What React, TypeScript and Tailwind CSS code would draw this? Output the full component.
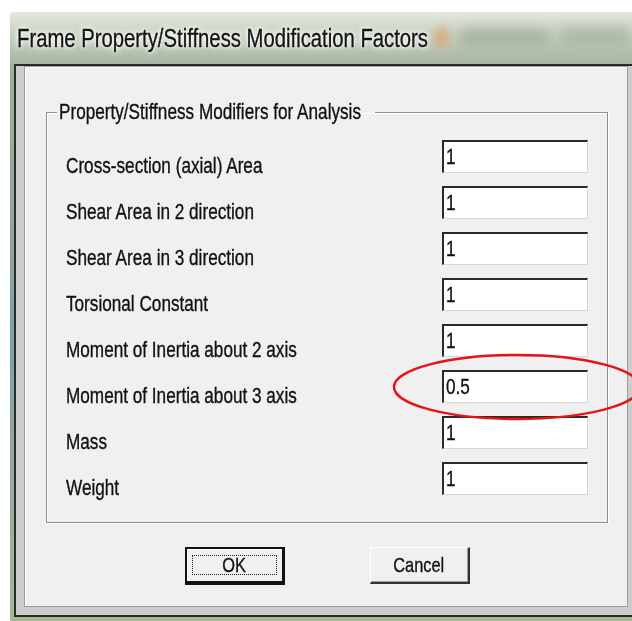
const rows = [
  { label: "Cross-section (axial) Area", value: "1" },
  { label: "Shear Area in 2 direction", value: "1" },
  { label: "Shear Area in 3 direction", value: "1" },
  { label: "Torsional Constant", value: "1" },
  { label: "Moment of Inertia about 2 axis", value: "1" },
  { label: "Moment of Inertia about 3 axis", value: "0.5" },
  { label: "Mass", value: "1" },
  { label: "Weight", value: "1" },
];

// Old MS Sans Serif is narrow, so squeeze the text horizontally
function Narrow({ children, center }: { children: React.ReactNode; center?: boolean }) {
  return (
    <span
      className={
        "inline-block whitespace-nowrap scale-x-[0.78] [-webkit-text-stroke:0.35px_#111] " +
        (center ? "origin-center" : "origin-left")
      }
    >
      {children}
    </span>
  );
}

function Field({ value }: { value: string }) {
  return (
    <div className="w-[146px] h-[33px] bg-white border-t-2 border-l-2 border-t-[#2a2a2a] border-l-[#2a2a2a] border-r border-b border-r-[#d6d6d6] border-b-[#d6d6d6] pl-[2px] text-[22px] leading-[30px] text-[#111]">
      <Narrow>{value}</Narrow>
    </div>
  );
}

export default function App() {
  return (
    <div className="relative w-[632px] h-[621px] overflow-hidden bg-white pt-[12px] pl-[10px] font-['Liberation_Sans',Arial,sans-serif]">
      <div className="w-[640px] flex flex-col">
        {/* glass title bar */}
        <div className="relative h-[52px] flex items-center pl-[7px] rounded-tl-[3px] bg-gradient-to-b from-[#e3e8df] via-[#c3cdbd] to-[#a9b5a3] overflow-hidden">
          <div className="absolute left-[425px] top-[14px] w-[14px] h-[22px] rounded-full bg-[#e0a070] blur-[4px] opacity-70" />
          <div className="absolute left-[450px] top-[16px] w-[90px] h-[18px] rounded bg-[#9aa594] blur-[6px] opacity-60" />
          <div className="absolute left-[550px] top-[14px] w-[70px] h-[20px] rounded bg-[#a2ad9c] blur-[6px] opacity-60" />
          <span className="relative text-[26px] text-[#161616] [text-shadow:0_0_6px_#fff,0_0_10px_#fff,0_0_3px_#fff]">
            <Narrow>Frame Property/Stiffness Modification Factors</Narrow>
          </span>
        </div>

        {/* window frame */}
        <div className="bg-gradient-to-b from-[#9fb190] via-[#7fa0a8] to-[#a5b894] pl-[4px] pb-[4px]">
          <div className="border-t-2 border-l-2 border-b-2 border-[#2b2b2b] bg-[#cdcdcd] pl-[8px] pb-[8px]">
            <div className="w-[604px] border border-[#9c9c9c] bg-[#f0f0f0] pl-[21px] pt-[33px] pb-[21px] shadow-[inset_1px_1px_0_#fff]">
              <fieldset className="w-[562px] border border-[#8f8f8f] pl-[19px] pr-[19px] pt-[16px] pb-[14px] shadow-[inset_1px_1px_0_#fff,1px_1px_0_#fff]">
                <legend className="-ml-[9px] px-[2px] text-[22px] leading-[24px] text-[#111]">
                  <div className="w-[314px]">
                    <Narrow>Property/Stiffness Modifiers for Analysis</Narrow>
                  </div>
                </legend>
                <div className="flex flex-col">
                  {rows.map((r) => (
                    <div key={r.label} className="h-[46px] flex justify-between items-start">
                      <div className="mt-[9px] text-[22px] leading-[33px] text-[#111]">
                        <Narrow>{r.label}</Narrow>
                      </div>
                      <Field value={r.value} />
                    </div>
                  ))}
                </div>
              </fieldset>

              <div className="flex justify-center gap-[85px] mt-[24px] pr-[19px]">
                <button className="w-[100px] h-[38px] border-t-2 border-l-2 border-r-[3px] border-b-[4px] border-[#111] bg-[#f0f0f0] px-[5px] py-[6px] shadow-[inset_1px_1px_0_#fff]">
                  <div className="h-full border border-dotted border-[#222] flex items-center justify-center text-[21px] text-[#111]">
                    <Narrow center>OK</Narrow>
                  </div>
                </button>
                <button className="w-[100px] h-[37px] border-t border-l border-t-[#fff] border-l-[#fff] border-r-2 border-b-2 border-r-[#333] border-b-[#333] bg-[#f0f0f0] flex items-center justify-center text-[21px] text-[#111] shadow-[inset_-1px_-1px_0_#a0a0a0]">
                  <Narrow center>Cancel</Narrow>
                </button>
              </div>
            </div>
          </div>
        </div>
      </div>

      {/* red callout around the modified value */}
      <svg className="absolute left-0 top-0 pointer-events-none" width="632" height="621">
        <ellipse cx="517" cy="387" rx="123" ry="32" fill="none" stroke="#e81414" strokeWidth="2.5" />
      </svg>
    </div>
  );
}
